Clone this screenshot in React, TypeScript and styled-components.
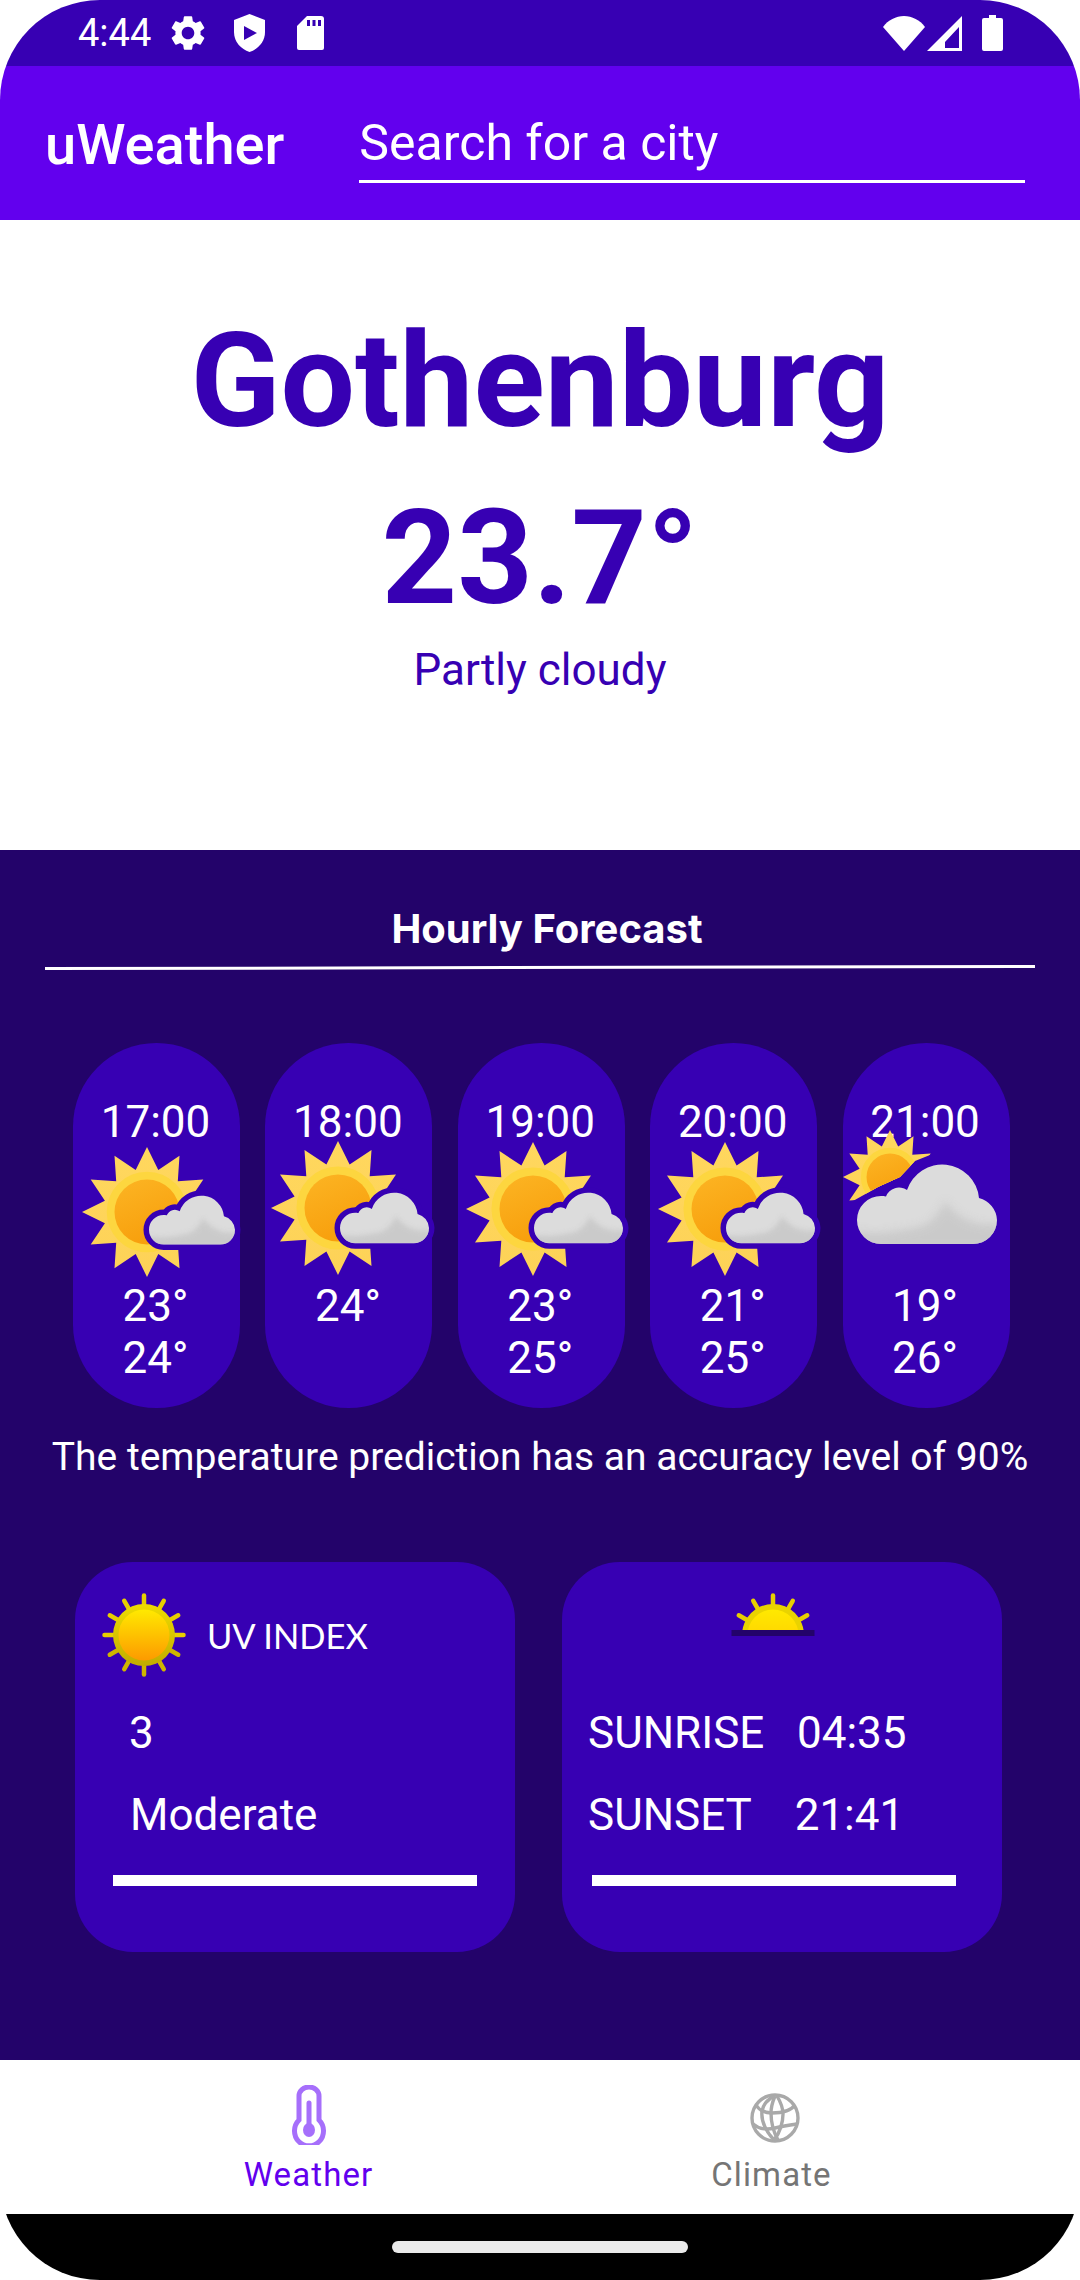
import React from "react";
import styled, { createGlobalStyle } from "styled-components";

const Global = createGlobalStyle`
  html, body { margin: 0; padding: 0; background: #fff; }
  body { font-family: Roboto, "Liberation Sans", sans-serif; }
`;

const Screen = styled.div`
  width: 1080px;
  height: 2280px;
  border-radius: 100px;
  overflow: hidden;
  display: flex;
  flex-direction: column;
  background: #fff;
`;
const StatusBar = styled.div`
  height: 66px;
  background: #3700b3;
  display: flex;
  align-items: center;
  padding: 0 77px 0 78px;
  color: #fff;
`;
const Clock = styled.span`
  font-size: 38px;
  line-height: 38px;
  width: 89px;
`;
const StatusGroup = styled.div<{ $gap: number; $left?: number }>`
  display: flex;
  align-items: center;
  gap: ${(p) => p.$gap}px;
  margin-left: ${(p) => p.$left ?? 0}px;
`;
const Spacer = styled.div`
  flex: 1;
`;
const AppBar = styled.header`
  height: 154px;
  background: #6200ee;
  display: flex;
  align-items: center;
  padding: 0 55px 0 45px;
  color: #fff;
`;
const AppTitle = styled.h1`
  margin: 0 75px 0 0;
  font-size: 56px;
  font-weight: 500;
  line-height: 64px;
  position: relative;
  top: 2px;
`;
const SearchField = styled.div`
  flex: 1;
  height: 69px;
  border-bottom: 3px solid #fff;
  font-size: 50px;
  line-height: 58px;
  margin-top: 8px;
  display: flex;
  align-items: flex-end;
`;
const SearchHint = styled.span`
  position: relative;
  top: -8px;
`;
const Hero = styled.section`
  height: 630px;
  box-sizing: border-box;
  padding-top: 84px;
  text-align: center;
  color: #3700b3;
`;
const City = styled.h2`
  margin: 0;
  font-size: 132px;
  line-height: 155px;
  font-weight: 700;
`;
const Temperature = styled.div`
  margin-top: 22px;
  font-size: 132px;
  line-height: 155px;
  font-weight: 700;
`;
const Condition = styled.div`
  margin-top: 8px;
  font-size: 44px;
  line-height: 52px;
`;
const Forecast = styled.section`
  height: 1210px;
  background: #23036a;
  color: #fff;
  display: flex;
  flex-direction: column;
`;
const SectionTitle = styled.h3`
  margin: 54px 0 0;
  padding-left: 14px;
  font-family: Inter, "Liberation Sans", sans-serif;
  font-size: 40px;
  line-height: 50px;
  font-weight: 700;
  text-align: center;
`;
const Divider = styled.div`
  margin: 12px 45px 0;
  height: 3px;
  background: #fff;
  transform: rotate(-0.13deg);
`;
const HourRow = styled.div`
  display: flex;
  gap: 25.4px;
  padding-left: 73px;
  margin-top: 74px;
`;
const HourCard = styled.div`
  width: 167px;
  height: 365px;
  box-sizing: border-box;
  padding: 53px 2px 0 0;
  border-radius: 84px;
  background: #3700b3;
  text-align: center;
`;
const HourText = styled.div`
  font-size: 44px;
  line-height: 52px;
`;
const WeatherSvg = styled.svg`
  display: block;
  overflow: visible;
`;
const Accuracy = styled.p`
  margin: 26px 0 0;
  font-size: 39px;
  line-height: 46px;
  text-align: center;
`;
const InfoRow = styled.div`
  display: flex;
  gap: 47px;
  padding-left: 75px;
  margin-top: 82px;
`;
const InfoCard = styled.div`
  width: 440px;
  height: 390px;
  border-radius: 58px;
  background: #3700b3;
  box-sizing: border-box;
  padding-top: 31px;
`;
const InfoHead = styled.div<{ $indent: number }>`
  display: flex;
  align-items: center;
  height: 84px;
  padding-left: ${(p) => p.$indent}px;
`;
const InfoLabel = styled.span`
  margin-left: 21px;
  font-family: Lato, "Liberation Sans", sans-serif;
  font-weight: 400;
  font-size: 34.5px;
`;
const InfoLine = styled.div<{ $indent: number }>`
  margin: 30px 0 0 ${(p) => p.$indent}px;
  font-size: 44px;
  line-height: 52px;
  white-space: pre;
`;
const InfoBar = styled.div<{ $indent: number }>`
  width: 364px;
  height: 11px;
  margin: 34px 0 0 ${(p) => p.$indent}px;
  background: #fff;
`;
const Nav = styled.nav`
  height: 154px;
  background: #fff;
  display: flex;
  padding: 0 77px;
`;
const NavItem = styled.div<{ $active?: boolean }>`
  flex: 1;
  display: flex;
  flex-direction: column;
  align-items: center;
  color: ${(p) => (p.$active ? "#6200ee" : "#757575")};
`;
const NavIconBox = styled.div<{ $bottom: number; $left: number }>`
  height: 95px;
  display: flex;
  align-items: flex-end;
  padding-bottom: ${(p) => p.$bottom}px;
  padding-left: ${(p) => p.$left}px;
  box-sizing: border-box;
`;
const NavLabel = styled.span`
  font-size: 33px;
  line-height: 39px;
  letter-spacing: 1.1px;
`;
const Gesture = styled.div`
  height: 66px;
  background: #000;
  display: flex;
  justify-content: center;
  padding-top: 27px;
  box-sizing: border-box;
`;
const HomePill = styled.div`
  width: 296px;
  height: 12px;
  border-radius: 6px;
  background: #eaeaea;
`;
const SdSvg = styled.svg`
  margin-left: 7px;
`;

const CLOUD =
  "M24 79A24 24 0 0 1 24 31C26 31 27 31 29 31.5A14 14 0 0 1 50 25A37 37 0 0 1 122 33A24 24 0 0 1 140 55A24 24 0 0 1 116 79Z";
const CLOUD_SHADE =
  "M0 66C20 70 42 66 62 62C76 58 84 46 88 36C94 46 106 54 118 58C128 60 136 60 142 58V84H0Z";

const starPoints = (cx: number, cy: number, R: number, r: number) => {
  const pts: string[] = [];
  for (let i = 0; i < 24; i++) {
    const a = (i * Math.PI) / 12 - Math.PI / 2;
    const d = i % 2 === 0 ? R : r;
    pts.push(`${(cx + d * Math.cos(a)).toFixed(1)},${(cy + d * Math.sin(a)).toFixed(1)}`);
  }
  return pts.join(" ");
};

type IconSpec = {
  id: string;
  sx: number;
  sy: number;
  r: number;
  cx: number;
  cy: number;
  cw: number;
  big?: boolean;
};

const WeatherIcon = ({ id, sx, sy, r, cx, cy, cw, big }: IconSpec) => {
  const k = cw / 140;
  return (
    <WeatherSvg width="167" height="132" viewBox="0 0 167 132">
      <defs>
        <linearGradient id={`star${id}`} x1="0" y1="0" x2="0" y2="1">
          <stop offset="0" stopColor="#ffd75e" />
          <stop offset="1" stopColor="#fdd257" />
        </linearGradient>
        <linearGradient id={`disc${id}`} x1="0.2" y1="0" x2="0.6" y2="1">
          <stop offset="0" stopColor="#fcb322" />
          <stop offset="1" stopColor="#f79e0b" />
        </linearGradient>
        <clipPath id={`clip${id}`}>
          <polygon points="0,-30 167,-30 92,5 72,13 57,29 35,39 10,53 0,60" />
        </clipPath>
        <clipPath id={`shape${id}`}>
          <path d={CLOUD} />
        </clipPath>
        <filter id={`soft${id}`} x="-20%" y="-40%" width="140%" height="180%">
          <feGaussianBlur stdDeviation="4" />
        </filter>
      </defs>
      <g clipPath={big ? `url(#clip${id})` : undefined}>
        <polygon points={starPoints(sx, sy, r, r * 0.67)} fill={`url(#star${id})`} />
        <circle cx={sx} cy={sy} r={r * 0.62} fill="#fdd63f" />
        <circle cx={sx} cy={sy} r={r * 0.5} fill={`url(#disc${id})`} />
      </g>
      <g transform={`translate(${cx} ${cy}) scale(${k})`}>
        <path
          d={CLOUD}
          fill="#dcdcdc"
          stroke="#3700b3"
          strokeWidth={(big ? 0 : 11) / k}
          strokeLinejoin="round"
          paintOrder="stroke"
        />
        <g clipPath={`url(#shape${id})`}>
          <path d={CLOUD_SHADE} fill="#c6c6c6" opacity="0.8" filter={`url(#soft${id})`} />
        </g>
      </g>
    </WeatherSvg>
  );
};

const hours: { time: string; temps: string[]; icon: IconSpec }[] = [
  { time: "17:00", temps: ["23°", "24°"], icon: { id: "a", sx: 74, sy: 64, r: 65, cx: 76, cy: 48, cw: 86 } },
  { time: "18:00", temps: ["24°"], icon: { id: "b", sx: 73, sy: 60, r: 67, cx: 75, cy: 45, cw: 89 } },
  { time: "19:00", temps: ["23°", "25°"], icon: { id: "c", sx: 75, sy: 61, r: 67, cx: 76, cy: 45, cw: 89 } },
  { time: "20:00", temps: ["21°", "25°"], icon: { id: "d", sx: 75, sy: 61, r: 67, cx: 76, cy: 45, cw: 89 } },
  { time: "21:00", temps: ["19°", "26°"], icon: { id: "e", sx: 47, sy: 29, r: 47, cx: 14, cy: 17, cw: 140, big: true } },
];

const rays = (half: boolean) => {
  const list = half ? [-60, -30, 0, 30, 60] : [0, 30, 60, 90, 120, 150, 180, 210, 240, 270, 300, 330];
  return list.map((a) => (
    <line
      key={a}
      x1="42"
      y1="2.5"
      x2="42"
      y2="12"
      stroke={a > 90 && a < 270 ? "#cfb500" : "#e8cf00"}
      strokeWidth="4.5"
      strokeLinecap="round"
      transform={`rotate(${a} 42 42)`}
    />
  ));
};

const UvSun = () => (
  <svg width="84" height="84" viewBox="0 0 84 84">
    <defs>
      <linearGradient id="uvRing" x1="0" y1="0" x2="0" y2="1">
        <stop offset="0" stopColor="#efdc00" />
        <stop offset="1" stopColor="#c2ac00" />
      </linearGradient>
      <linearGradient id="uvDisc" x1="0" y1="0" x2="0" y2="1">
        <stop offset="0" stopColor="#ffe900" />
        <stop offset="1" stopColor="#fd9a00" />
      </linearGradient>
    </defs>
    {rays(false)}
    <circle cx="42" cy="42" r="31" fill="url(#uvRing)" />
    <circle cx="42" cy="42" r="25.5" fill="url(#uvDisc)" />
  </svg>
);

const RiseSun = () => (
  <svg width="84" height="84" viewBox="0 0 84 84">
    <defs>
      <linearGradient id="riseDisc" x1="0" y1="0" x2="0" y2="1">
        <stop offset="0" stopColor="#ffe900" />
        <stop offset="1" stopColor="#ffc400" />
      </linearGradient>
      <clipPath id="riseClip">
        <rect x="0" y="0" width="84" height="38" />
      </clipPath>
    </defs>
    {rays(true)}
    <g clipPath="url(#riseClip)">
      <circle cx="42" cy="42" r="31" fill="#e9d300" />
      <circle cx="42" cy="42" r="25.5" fill="url(#riseDisc)" />
    </g>
    <rect x="0.5" y="37" width="83" height="6" fill="#23036a" />
  </svg>
);

const GearIcon = () => (
  <svg width="42" height="42" viewBox="0 0 24 24" fill="#fff">
    <path d="M19.14 12.94c.04-.3.06-.61.06-.94 0-.32-.02-.64-.07-.94l2.03-1.58a.49.49 0 0 0 .12-.61l-1.92-3.32a.488.488 0 0 0-.59-.22l-2.39.96c-.5-.38-1.03-.7-1.62-.94l-.36-2.54a.484.484 0 0 0-.48-.41h-3.84c-.24 0-.43.17-.47.41l-.36 2.54c-.59.24-1.13.57-1.62.94l-2.39-.96c-.22-.08-.47 0-.59.22L2.74 8.87c-.12.21-.08.47.12.61l2.03 1.58c-.05.3-.09.63-.09.94s.02.64.07.94l-2.03 1.58a.49.49 0 0 0-.12.61l1.92 3.32c.12.22.37.29.59.22l2.39-.96c.5.38 1.03.7 1.62.94l.36 2.54c.05.24.24.41.48.41h3.84c.24 0 .44-.17.47-.41l.36-2.54c.59-.24 1.13-.56 1.62-.94l2.39.96c.22.08.47 0 .59-.22l1.92-3.32c.12-.22.07-.47-.12-.61l-2.01-1.58zM12 15.6c-1.98 0-3.6-1.62-3.6-3.6s1.62-3.6 3.6-3.6 3.6 1.62 3.6 3.6-1.62 3.6-3.6 3.6z" />
  </svg>
);
const ShieldIcon = () => (
  <svg width="31" height="38" viewBox="0 0 31 38">
    <path d="M15.5 0L31 6V18C31 28 24 35 15.5 38C7 35 0 28 0 18V6Z" fill="#fff" />
    <path d="M10 12L23 19L10 26Z" fill="#3700b3" />
  </svg>
);
const SdIcon = () => (
  <SdSvg width="27" height="34" viewBox="0 0 27 34">
    <path d="M10 0H24a3 3 0 0 1 3 3V32a2 2 0 0 1-2 2H2a2 2 0 0 1-2-2V10Z" fill="#fff" />
    <path d="M10 4h3v6h-3zM15.500 4h3v6h-3zM21 4h3v6h-3z" fill="#3700b3" />
  </SdSvg>
);
const WifiIcon = () => (
  <svg width="42" height="35" viewBox="0 0 42 35">
    <path d="M0 11C5 4 13 0 21 0S37 4 42 11L21 35Z" fill="#fff" />
  </svg>
);
const SignalIcon = () => (
  <svg width="35" height="35" viewBox="0 0 35 35">
    <path fillRule="evenodd" d="M35 0V35H0ZM32 11L18 26V32H32Z" fill="#fff" />
  </svg>
);
const BatteryIcon = () => (
  <svg width="21" height="36" viewBox="0 0 21 36">
    <path d="M7 0H14V3H19a2 2 0 0 1 2 2V34a2 2 0 0 1-2 2H2a2 2 0 0 1-2-2V5a2 2 0 0 1 2-2H7Z" fill="#fff" />
  </svg>
);
const ThermometerIcon = () => (
  <svg width="36" height="60" viewBox="0 0 36 60" fill="none">
    <path
      d="M8 35V11a10 9 0 0 1 20 0V35a14.500 15 0 1 1-20 0Z"
      stroke="#a66ffb"
      strokeWidth="5"
    />
    <path d="M18 18V44" stroke="#a66ffb" strokeWidth="5" strokeLinecap="round" />
    <ellipse cx="18" cy="45" rx="6" ry="7" fill="#a66ffb" />
  </svg>
);
const GlobeIcon = () => (
  <svg width="50" height="50" viewBox="0 0 50 50" fill="none" stroke="#a9a9a9" strokeWidth="3.4">
    <circle cx="25" cy="25" r="23" />
    <path d="M24 3C17 7 13 12 12 18C11 27 14 36 24 47" />
    <path d="M25 3C23 8 21 12 21 20C21 28 23 38 28 47" />
    <path d="M27 3C30 8 33 14 33 21C33 29 30 40 24 47" />
    <path d="M6 12C9 17 14 20 22 20C31 20 40 19 45 12" />
    <path d="M3 31C10 37 17 37 25 35C33 33 40 32 47 31" />
  </svg>
);

export default function App() {
  return (
    <Screen>
      <Global />
      <StatusBar>
        <Clock>4:44</Clock>
        <StatusGroup $gap={25}>
          <GearIcon />
          <ShieldIcon />
          <SdIcon />
        </StatusGroup>
        <Spacer />
        <StatusGroup $gap={2}>
          <WifiIcon />
          <SignalIcon />
        </StatusGroup>
        <StatusGroup $gap={0} $left={20}>
          <BatteryIcon />
        </StatusGroup>
      </StatusBar>
      <AppBar>
        <AppTitle>uWeather</AppTitle>
        <SearchField>
          <SearchHint>Search for a city</SearchHint>
        </SearchField>
      </AppBar>
      <Hero>
        <City>Gothenburg</City>
        <Temperature>23.7°</Temperature>
        <Condition>Partly cloudy</Condition>
      </Hero>
      <Forecast>
        <SectionTitle>Hourly Forecast</SectionTitle>
        <Divider />
        <HourRow>
          {hours.map((h) => (
            <HourCard key={h.time}>
              <HourText>{h.time}</HourText>
              <WeatherIcon {...h.icon} />
              {h.temps.map((t) => (
                <HourText key={t}>{t}</HourText>
              ))}
            </HourCard>
          ))}
        </HourRow>
        <Accuracy>The temperature prediction has an accuracy level of 90%</Accuracy>
        <InfoRow>
          <InfoCard>
            <InfoHead $indent={27}>
              <UvSun />
              <InfoLabel>UV INDEX</InfoLabel>
            </InfoHead>
            <InfoLine $indent={54}>3</InfoLine>
            <InfoLine $indent={55}>Moderate</InfoLine>
            <InfoBar $indent={38} />
          </InfoCard>
          <InfoCard>
            <InfoHead $indent={169}>
              <RiseSun />
            </InfoHead>
            <InfoLine $indent={26}>{"SUNRISE   04:35"}</InfoLine>
            <InfoLine $indent={26}>{"SUNSET    21:41"}</InfoLine>
            <InfoBar $indent={30} />
          </InfoCard>
        </InfoRow>
      </Forecast>
      <Nav>
        <NavItem $active>
          <NavIconBox $bottom={10} $left={0}>
            <ThermometerIcon />
          </NavIconBox>
          <NavLabel>Weather</NavLabel>
        </NavItem>
        <NavItem>
          <NavIconBox $bottom={12} $left={7}>
            <GlobeIcon />
          </NavIconBox>
          <NavLabel>Climate</NavLabel>
        </NavItem>
      </Nav>
      <Gesture>
        <HomePill />
      </Gesture>
    </Screen>
  );
}
